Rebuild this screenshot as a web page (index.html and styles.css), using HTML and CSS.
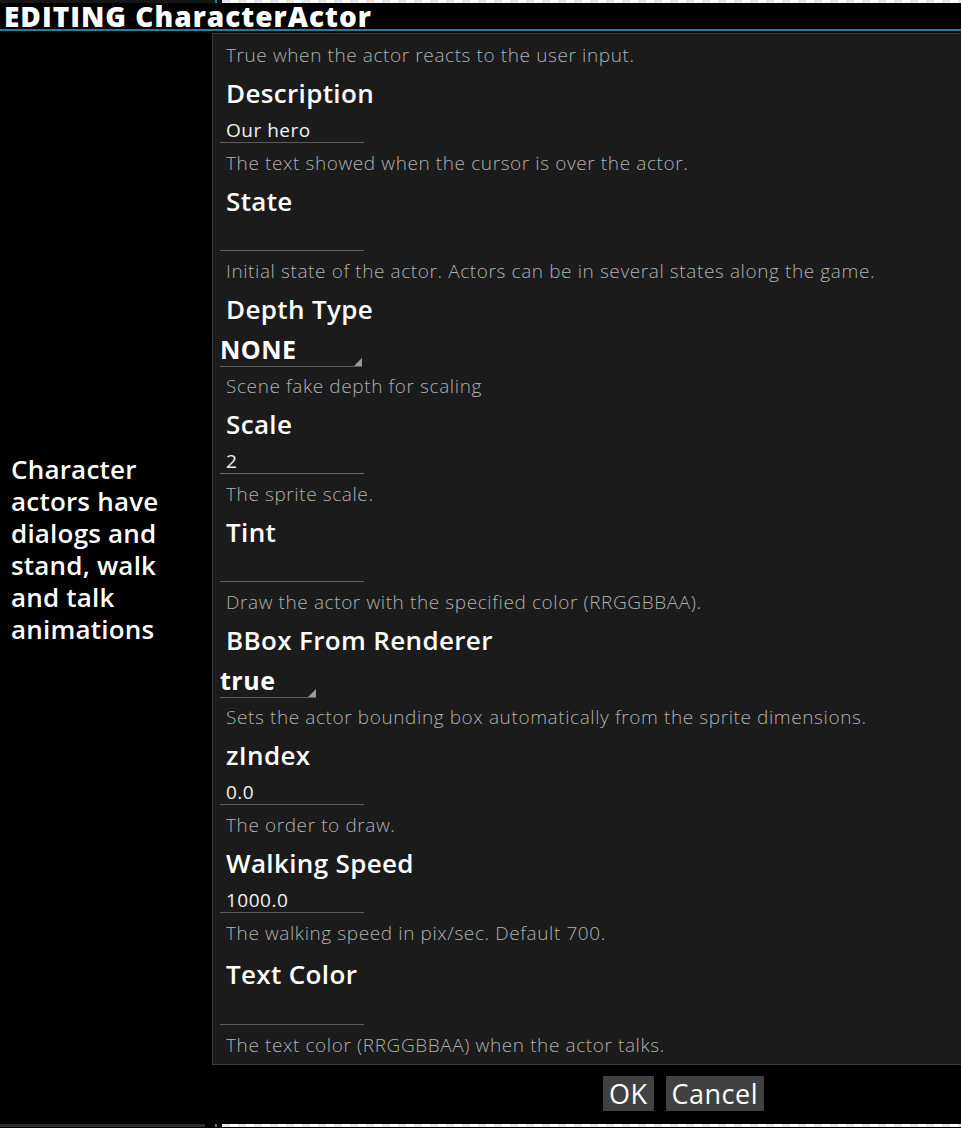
FILE: index.html
```html
<!DOCTYPE html>
<html lang="en">
<head>
<meta charset="utf-8">
<title>EDITING CharacterActor</title>
<link rel="stylesheet" href="styles.css">
</head>
<body>
<div class="strip">
  <div class="strip-dark"></div>
  <div class="strip-blue"></div>
  <div class="strip-gap"></div>
  <div class="strip-checker"></div>
</div>
<header class="header">
  <h1 class="title">EDITING CharacterActor</h1>
</header>
<main class="main">
  <aside class="side">
    <p class="side-text">Character<br>actors have<br>dialogs and<br>stand, walk<br>and talk<br>animations</p>
  </aside>
  <section class="panel">
    <p class="desc">True when the actor reacts to the user input.</p>

    <h2 class="label">Description</h2>
    <div class="field"><span class="field-value">Our hero</span></div>
    <p class="desc">The text showed when the cursor is over the actor.</p>

    <h2 class="label">State</h2>
    <div class="field"><span class="field-value"></span></div>
    <p class="desc">Initial state of the actor. Actors can be in several states along the game.</p>

    <h2 class="label">Depth Type</h2>
    <div class="select select--wide">NONE</div>
    <p class="desc">Scene fake depth for scaling</p>

    <h2 class="label">Scale</h2>
    <div class="field field--focus"><span class="field-value">2</span></div>
    <p class="desc">The sprite scale.</p>

    <h2 class="label">Tint</h2>
    <div class="field"><span class="field-value"></span></div>
    <p class="desc">Draw the actor with the specified color (RRGGBBAA).</p>

    <h2 class="label">BBox From Renderer</h2>
    <div class="select select--narrow">true</div>
    <p class="desc">Sets the actor bounding box automatically from the sprite dimensions.</p>

    <h2 class="label">zIndex</h2>
    <div class="field"><span class="field-value">0.0</span></div>
    <p class="desc">The order to draw.</p>

    <h2 class="label">Walking Speed</h2>
    <div class="field"><span class="field-value">1000.0</span></div>
    <p class="desc">The walking speed in pix/sec. Default 700.</p>

    <h2 class="label label--last">Text Color</h2>
    <div class="field"><span class="field-value"></span></div>
    <p class="desc">The text color (RRGGBBAA) when the actor talks.</p>
  </section>
</main>
<footer class="footer">
  <button class="btn" type="button">OK</button>
  <button class="btn" type="button">Cancel</button>
</footer>
<div class="strip strip--bottom">
  <div class="strip-grey"></div>
  <div class="strip-black"></div>
  <div class="strip-blue"></div>
  <div class="strip-gap"></div>
  <div class="strip-checker"></div>
</div>
</body>
</html>
```
FILE: styles.css
```css
html, body {
  margin: 0;
  padding: 0;
  background: #000;
}

body {
  width: 961px;
  height: 1128px;
  overflow: hidden;
  font-family: "Open Sans", "Noto Sans", "DejaVu Sans", sans-serif;
  color: #fff;
}

/* thin window strips */
.strip {
  display: flex;
  height: 3px;
}
.strip-dark {
  width: 215px;
  background: #161616;
}
.strip-grey {
  width: 205px;
  background: #2e2e2e;
}
.strip-black {
  width: 10px;
  background: #000;
}
.strip-blue {
  width: 2px;
  background: #1f7ea3;
}
.strip-gap {
  width: 5px;
  background: #000;
}
.strip-checker {
  flex: 1;
  background-color: #ffffff;
  background-image: repeating-linear-gradient(90deg, #e6e6e6 0 8px, #ffffff 8px 16px);
}

/* header */
.header {
  height: 26px;
  border-bottom: 2px solid #1f7ea3;
  padding-left: 4px;
}
.title {
  margin: 0;
  font-family: "Open Sans", "Noto Sans", sans-serif;
  font-weight: 800;
  font-size: 28px;
  line-height: 26px;
  letter-spacing: 1px;
  white-space: nowrap;
}

/* main */
.main {
  display: flex;
  margin-top: 2px;
}
.side {
  width: 212px;
  flex: none;
  display: flex;
  align-items: center;
}
.side-text {
  margin: 0 0 0 11px;
  font-size: 26px;
  font-weight: 600;
  line-height: 32px;
  letter-spacing: 0.2px;
}

.panel {
  flex: 1;
  background: #1b1b1b;
  border: 1px solid #3d3d3d;
  border-right: none;
  padding: 5px 0 3px 7px;
}

.desc {
  margin: 0;
  padding-left: 6px;
  height: 32px;
  line-height: 32px;
  font-size: 19px;
  font-weight: 300;
  letter-spacing: 0.6px;
  color: #b0b0b0;
  white-space: nowrap;
}

.label {
  margin: 0;
  padding-left: 6px;
  height: 44px;
  line-height: 44px;
  font-size: 26px;
  font-weight: 600;
  letter-spacing: 0.35px;
  color: #fff;
  white-space: nowrap;
}
.label--last {
  margin-top: 3px;
  margin-bottom: 1px;
}

.field {
  width: 144px;
  box-sizing: border-box;
  padding: 3px 0 0 6px;
  height: 28px;
  border-bottom: 1px solid #5c5c5c;
  margin-bottom: 4px;
}
.field--focus {
  border-bottom-color: #1f7ea3;
}
.field-value {
  display: block;
  height: 24px;
  line-height: 24px;
  font-size: 19px;
  font-weight: 400;
  letter-spacing: 0.5px;
  color: #f2f2f2;
}

.select {
  position: relative;
  box-sizing: border-box;
  height: 36px;
  padding-top: 3px;
  line-height: 30px;
  font-size: 25px;
  font-weight: 700;
  letter-spacing: 0.5px;
  color: #fff;
  border-bottom: 1px solid #5c5c5c;
  margin-bottom: 3px;
}
.select--wide {
  width: 142px;
}
.select--narrow {
  width: 96px;
}
.select::after {
  content: "";
  position: absolute;
  right: 0;
  bottom: 0;
  width: 0;
  height: 0;
  border-left: 8px solid transparent;
  border-bottom: 8px solid #9a9a9a;
}

/* footer */
.footer {
  height: 59px;
  box-sizing: border-box;
  padding: 11px 0 0 603px;
  display: flex;
  gap: 12px;
  align-items: flex-start;
}
.btn {
  height: 35px;
  margin: 0;
  padding: 0 6px;
  border: none;
  background: #414141;
  color: #fff;
  font-family: "Open Sans", "Noto Sans", sans-serif;
  font-size: 27px;
  font-weight: 500;
  letter-spacing: 0.5px;
  line-height: 35px;
}
```
